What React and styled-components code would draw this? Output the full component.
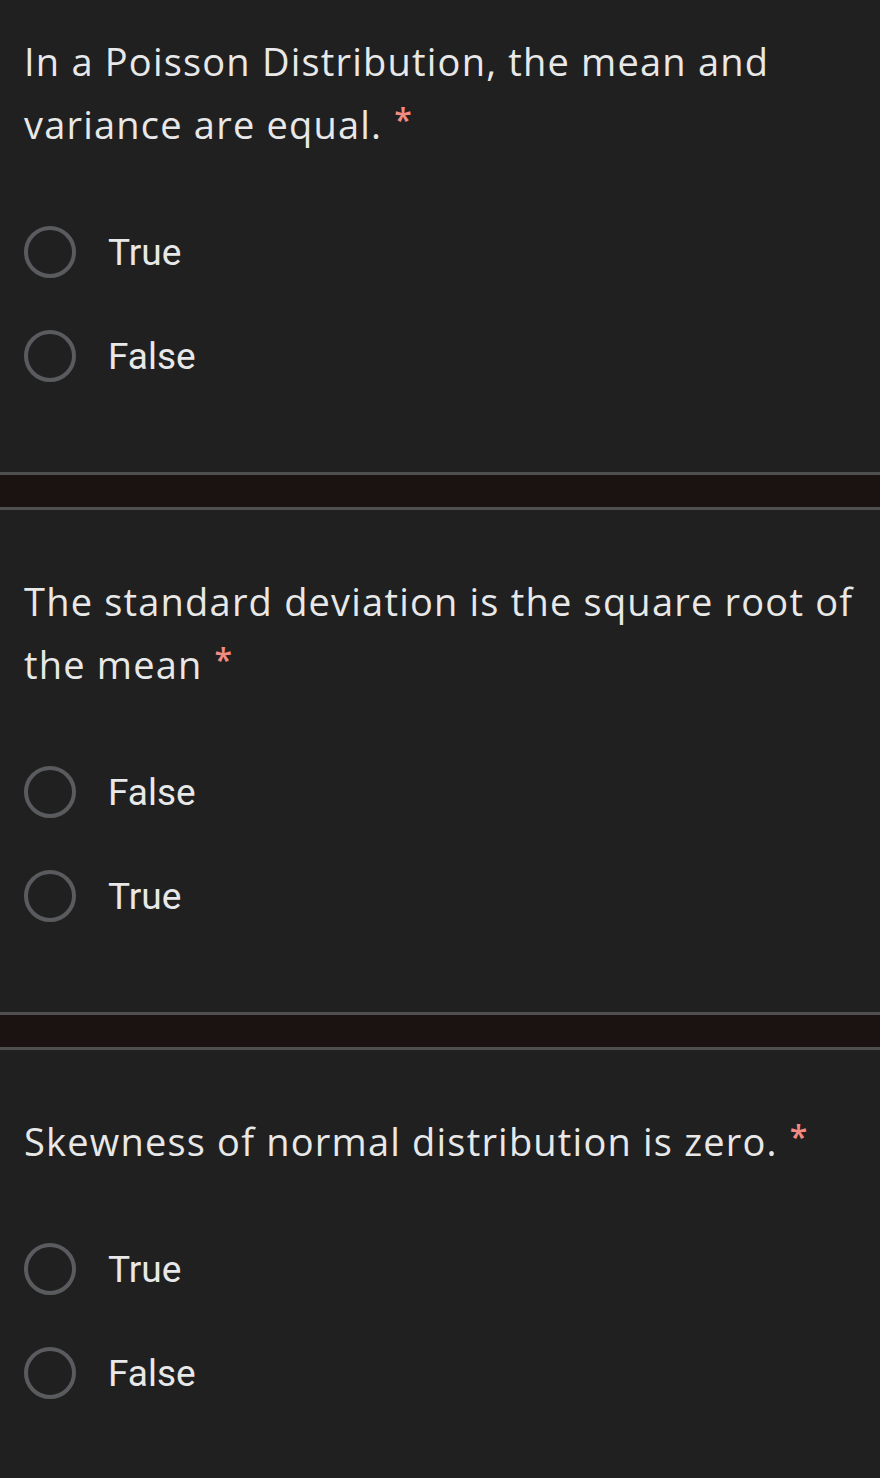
import React from 'react';
import styled, { createGlobalStyle } from 'styled-components';

const GlobalStyle = createGlobalStyle`
  html, body {
    margin: 0;
    padding: 0;
    background: #202020;
  }
`;

const Page = styled.div`
  width: 880px;
  min-height: 1478px;
  background: #202020;
  display: flex;
  flex-direction: column;
`;

const Card = styled.section`
  background: #202020;
  padding: ${p => (p.first ? '30px' : '60px')} 24px 64px 24px;
`;

const Divider = styled.div`
  height: 32px;
  background: #1b1212;
  border-top: 3px solid #4f4f4f;
  border-bottom: 3px solid #4f4f4f;
`;

const Title = styled.h2`
  margin: 0;
  font-family: "Open Sans", "Liberation Sans", sans-serif;
  font-weight: 400;
  font-size: 38px;
  letter-spacing: 1.2px;
  line-height: 63px;
  color: #e8e8e8;
  white-space: nowrap;
`;

const Required = styled.span`
  color: #f28b82;
  margin-left: 12px;
  font-size: 32px;
  font-weight: 600;
  vertical-align: top;
  position: relative;
  top: -5px;
`;

const Options = styled.div`
  margin-top: 44px;
  display: flex;
  flex-direction: column;
`;

const Option = styled.label`
  height: 104px;
  display: flex;
  align-items: center;
  gap: 32px;
`;

const Radio = styled.span`
  width: 52px;
  height: 52px;
  box-sizing: border-box;
  border-radius: 50%;
  border: 4px solid #5a5b5e;
  flex: none;
`;

const OptionText = styled.span`
  font-family: Roboto, "Liberation Sans", sans-serif;
  font-size: 37px;
  color: #e8e8e8;
`;

const questions = [
  {
    lines: ['In a Poisson Distribution, the mean and', 'variance are equal.'],
    options: ['True', 'False'],
  },
  {
    lines: ['The standard deviation is the square root of', 'the mean'],
    options: ['False', 'True'],
  },
  {
    lines: ['Skewness of normal distribution is zero.'],
    options: ['True', 'False'],
  },
];

const Question = ({ q, first }) => (
  <Card first={first}>
    <Title>
      {q.lines.map((line, i) => (
        <React.Fragment key={i}>
          {line}
          {i === q.lines.length - 1 ? <Required>*</Required> : <br />}
        </React.Fragment>
      ))}
    </Title>
    <Options>
      {q.options.map(o => (
        <Option key={o}>
          <Radio />
          <OptionText>{o}</OptionText>
        </Option>
      ))}
    </Options>
  </Card>
);

export default function App() {
  return (
    <Page>
      <GlobalStyle />
      {questions.map((q, i) => (
        <React.Fragment key={i}>
          {i > 0 && <Divider />}
          <Question q={q} first={i === 0} />
        </React.Fragment>
      ))}
    </Page>
  );
}
